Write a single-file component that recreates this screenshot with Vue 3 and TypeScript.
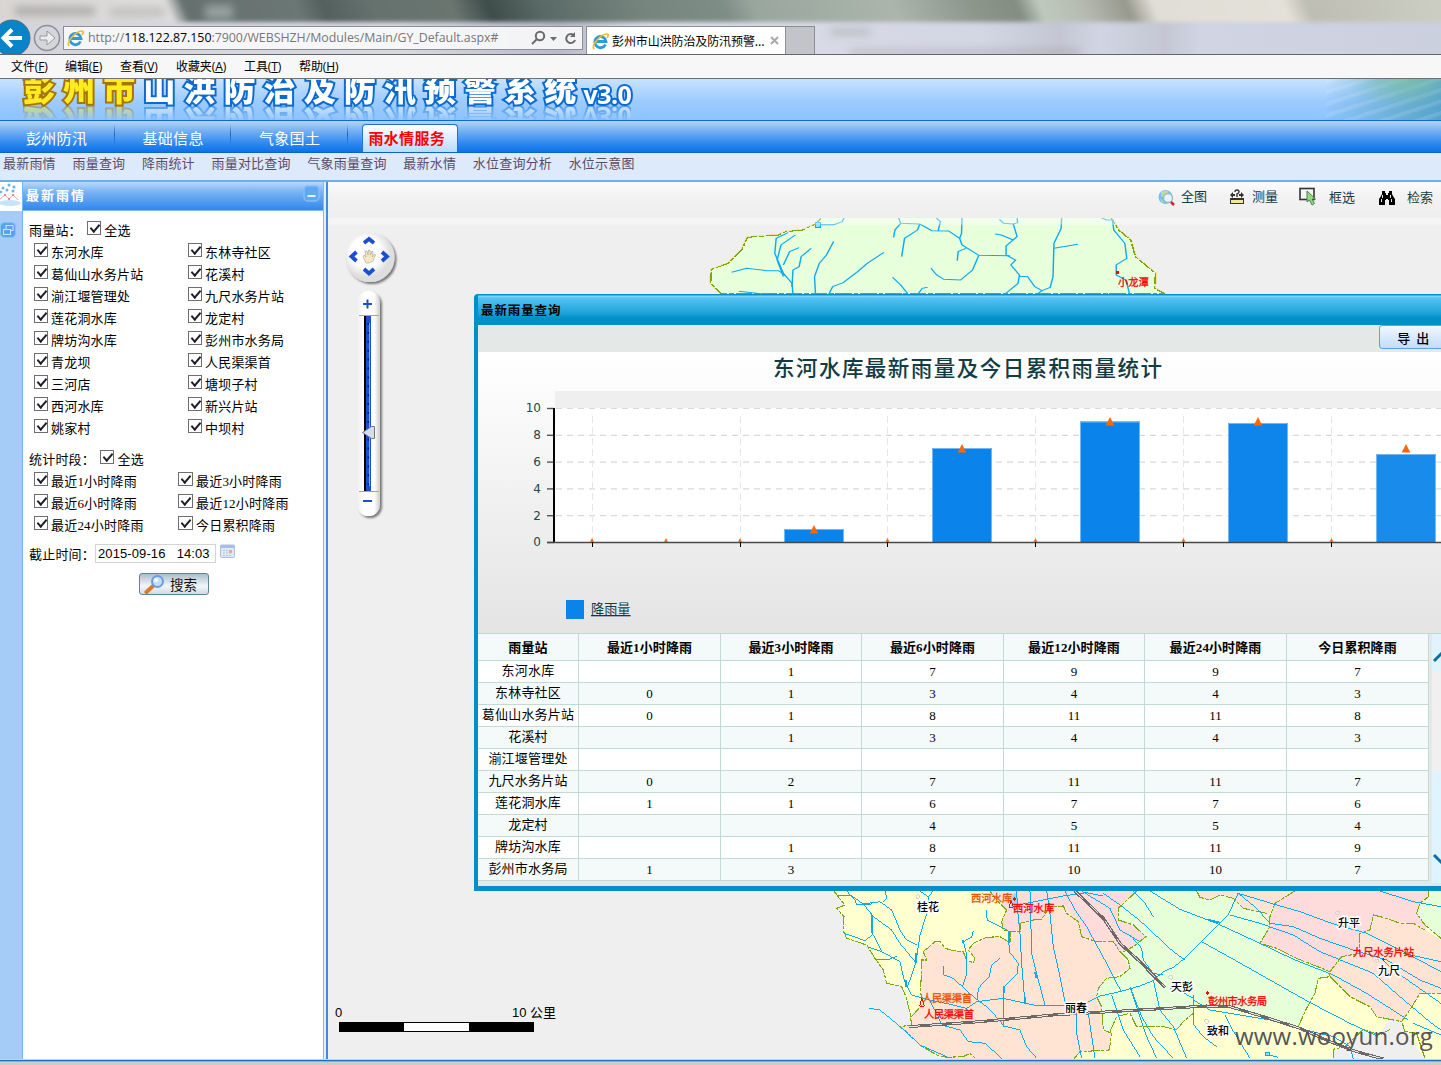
<script setup lang="ts">
const menus = [
  ['文件', 'F', 54], ['编辑', 'E', 55], ['查看', 'V', 56],
  ['收藏夹', 'A', 68], ['工具', 'T', 55], ['帮助', 'H', 60],
] as [string, string, number][]
const tabs = ['彭州防汛', '基础信息', '气象国土']
const subTabs = ['最新雨情', '雨量查询', '降雨统计', '雨量对比查询', '气象雨量查询', '最新水情', '水位查询分析', '水位示意图']
const stations = [
  '东河水库', '东林寺社区', '葛仙山水务片站', '花溪村', '湔江堰管理处', '九尺水务片站',
  '莲花洞水库', '龙定村', '牌坊沟水库', '彭州市水务局', '青龙坝', '人民渠渠首',
  '三河店', '塘坝子村', '西河水库', '新兴片站', '姚家村', '中坝村',
]
const periods = ['最近1小时降雨', '最近3小时降雨', '最近6小时降雨', '最近12小时降雨', '最近24小时降雨', '今日累积降雨']
const rows: string[][] = [
  ['东河水库', '', '1', '7', '9', '9', '7'],
  ['东林寺社区', '0', '1', '3', '4', '4', '3'],
  ['葛仙山水务片站', '0', '1', '8', '11', '11', '8'],
  ['花溪村', '', '1', '3', '4', '4', '3'],
  ['湔江堰管理处', '', '', '', '', '', ''],
  ['九尺水务片站', '0', '2', '7', '11', '11', '7'],
  ['莲花洞水库', '1', '1', '6', '7', '7', '6'],
  ['龙定村', '', '', '4', '5', '5', '4'],
  ['牌坊沟水库', '', '1', '8', '11', '11', '9'],
  ['彭州市水务局', '1', '3', '7', '10', '10', '7'],
]
const ticks = [10, 8, 6, 4, 2, 0].map((v, i) => ({ v, y: 408.5 + i * 26.8 }))
const guides = [592.5, 740.5, 887.5, 1035.5, 1183.5, 1331.5]
const bars = [
  { x: 784, top: 529, o: 1 }, { x: 932, top: 448, o: 1 }, { x: 1080, top: 421.5, o: 1 },
  { x: 1228, top: 423, o: 0.99 }, { x: 1376, top: 454, o: 0.94 },
]
const marks: [number, number][] = [[814, 529.5], [962, 448.5], [1110, 421.5], [1258, 421.5], [1406, 448.5]]
const zeroMarks = [592, 666, 740, 887.5, 1035.5, 1183.5, 1331.5]
// rivers of the southern sheet
const rivers = [
  '50,45 95,48 130,72 180,65 215,90 240,150 260,180 290,195', '80,33 105,60 110,75 155,72', '195,33 200,55 190,65',
  '155,100 157,165 135,182 68,158', '130,72 160,110 215,150 240,190 285,245', '160,165 185,215 140,200', '185,215 240,245 250,290 262,325',
  '165,238 205,240 230,228', '300,33 325,50 322,95 300,165 288,245 270,300 262,320 275,345 330,360 400,375 440,385 470,365',
  '325,50 340,33', '370,258 372,285 400,295 425,318 460,350 500,380 520,400 552,438 600,450 620,500 650,535',
  '460,153 455,172 430,185 440,225 438,290 428,318', '540,235 515,255 508,290 475,325 472,360',
  '498,90 502,120 565,152 568,215 595,250 592,280 552,320 550,440', '470,365 550,355 640,375 735,378 800,368 840,348 900,335 960,318 1000,302 1030,275 1060,262 1095,235 1145,183 1225,105 1255,38',
  '590,33 593,90 600,160 605,250 615,370', '630,33 635,220 655,300 675,375', '680,33 690,100 700,200 720,290 735,365 768,380 770,460 785,535',
  '605,73 660,62 730,48 800,38 850,48', '735,33 765,90 800,140 860,250 890,310 905,335', '785,33 870,85 900,150 960,185',
  '850,40 900,75 960,122 1060,215 1095,240', '940,33 975,70 1000,110', '148,385 180,390 235,435 300,495 380,530',
  '330,365 350,400 365,435 420,450 445,485 495,490 545,535', '805,400 825,535', '875,345 910,450 960,530', '930,320 950,380 980,470 1010,535',
  '990,33 1080,88 1190,130 1320,190 1425,240 1540,285 1640,340 1765,420', '1230,105 1320,130 1420,165 1500,215 1660,280 1740,350 1835,430 1863,450',
  '1145,185 1235,235 1350,300 1465,365 1590,430 1675,470', '1255,40 1370,75 1440,95 1535,130 1640,160 1760,220 1863,275',
  '1255,40 1310,85 1350,130 1420,140 1500,175 1600,210 1700,240 1800,300 1863,325', '1680,33 1780,65 1863,80', '1750,220 1863,245',
  '1690,240 1720,270 1863,370', '930,165 965,205 970,240 1000,280 1030,285', '930,320 965,410 1000,470 1060,535',
  '1000,300 1020,390 1060,440 1100,535', '1120,345 1122,435 1150,470 1190,500', '1120,360 1170,390 1260,405 1350,420 1435,445 1540,470 1590,500 1600,537',
  '1215,405 1235,445 1290,535', '1050,325 1085,335 1120,355', '1340,523 1375,532', '1780,430 1863,465',
]
const bounds = [
  '42,33 62,60 75,75 50,85 72,110 70,150 80,175 140,195 165,235 190,270 200,310 245,320 258,350 270,400 275,435 240,440 265,460 300,495 350,525 380,532 430,530 450,520 466,535',
  '275,410 310,370 302,340 305,240 320,240 310,215 345,185 360,185 375,205 400,212 430,215 440,240 460,248 465,235 445,210 460,190 500,172 540,170 570,188 570,155 600,155 600,130 640,120 665,118 690,80 730,78 740,100 775,125 785,170 830,185 880,185 900,215 925,240 930,265 900,290 860,295 835,325 830,350 845,380 850,450 875,460 868,510 780,515 762,537',
  '510,33 530,60 560,90 545,125 550,150 570,155', '950,33 895,85 895,120 940,135 978,170 940,200 905,218',
  '870,455 890,410 930,400 950,440 1030,440 1070,450 1090,425 1120,400 1120,365', '1130,33 1140,52 1170,60 1200,45 1240,55 1270,85 1340,100',
  '1425,33 1365,70 1350,110 1350,140 1320,190 1370,205 1430,235 1530,275 1565,230 1620,220 1620,160 1650,150 1660,105 1700,115 1740,130 1780,130 1815,150',
  '1825,33 1825,50 1800,70 1790,100 1815,135 1863,175', '1435,440 1460,385 1485,340 1495,295 1530,290 1530,275',
  '1530,290 1550,310 1590,350 1650,380 1670,410 1745,425 1770,390 1800,340 1863,340', '1540,535 1540,508 1575,500 1630,448 1680,465 1710,448', '1747,430 1755,455 1790,460 1815,535',
]
const topRivers = [
  '322,111 318,125 300,134 268,134', '205,158 180,175 177,220 195,280 213,310 215,342', '220,165 190,195 182,240 195,290', '228,203 208,215 195,255',
  '253,205 232,230 228,260 215,270 213,320', '300,184 285,225 270,250 260,290 262,342', '405,217 370,250 350,275 320,308 298,320 290,342',
  '87,277 118,265 160,272 185,272 200,288', '102,334 148,341', '435,111 440,130 480,132 505,152 540,153 563,175 568,195 603,226 668,227',
  '480,132 475,150 448,175 442,230', '440,130 428,150 425,172', '512,111 523,125 518,153', '568,111 567,160 563,175', '576,205 560,215 558,242',
  '603,226 590,270 565,300 530,298 515,285 503,265', '423,292 440,315 455,342', '496,322 485,325 476,342', '646,118 655,130 675,132 683,170 660,198 660,225 680,240 670,255 688,285 685,310 658,342',
  '683,111 684,128 675,132', '637,162 650,165 675,180', '688,289 705,290 720,320 735,332 752,322 758,290 760,190 775,145 776,111', '725,342 735,332', '760,205 810,193',
  '855,111 870,120 882,120 885,150 908,190 912,235 890,255 890,285 910,300 918,342',
]
const topBound = '275,111 265,130 235,150 200,155 185,165 120,172 108,210 80,250 45,268 43,310 65,342 992,342 970,325 972,280 930,230 920,180 895,150 878,111'
const rail = ['267,440 480,425 700,405 840,397 1160,378 1230,380 1330,410 1440,445 1530,485 1610,515 1690,537', '765,33 850,115 900,190 960,245 1036,323']
</script>

<template>
  <div class="app">
    <header class="chrome">
      <div class="glass"></div>
      <div class="ghost g1"></div><div class="ghost g2"></div><div class="ghost g3"></div><div class="ghost g4"></div><div class="ghost g5"></div>
      <div class="bar">
        <svg class="nav-btns" width="63" height="35" viewBox="0 19 63 35">
          <circle cx="12" cy="38" r="18" fill="#0a84c8" stroke="#526a7c" />
          <path d="M22 38H4M12 29.5L3.5 38l8.500 8.500" fill="none" stroke="#fff" stroke-width="4" />
          <circle cx="47" cy="38" r="12.500" fill="#d5d6dc" stroke="#8d8e94" stroke-width="1.500" />
          <path d="M40 36h7v-5l8 7-8 7v-5h-7z" fill="#eee" stroke="#999" />
        </svg>
        <div class="address">
          <svg class="ie" width="17" height="17" viewBox="0 0 17 17"><path d="M13.500 11.500A5.600 5.600 0 1 1 14 8.500H4" fill="none" stroke="#2d9bd9" stroke-width="2.800" /><path d="M2 16C-1 12 9 1 15 1c2 0 1 3 0 4" fill="none" stroke="#f4b92b" stroke-width="1.700" /></svg>
          <span class="url">http://<b>118.122.87.150</b>:7900/WEBSHZH/Modules/Main/GY_Default.aspx#</span>
          <svg width="50" height="18" viewBox="0 0 50 18" fill="none" stroke="#6b6b6b" stroke-width="2"><circle cx="11" cy="7" r="4.200" /><path d="M8 10L3 15" /><path d="M21 8h7l-3.500 4z" fill="#6b6b6b" stroke="none" /><path d="M44.500 6A4.500 4.500 0 1 0 46 11" /><path d="M46 3v5h-5z" fill="#6b6b6b" stroke="none" /></svg>
        </div>
        <div class="tab">
          <svg class="ie" width="17" height="17" viewBox="0 0 17 17"><path d="M13.500 11.500A5.600 5.600 0 1 1 14 8.500H4" fill="none" stroke="#2d9bd9" stroke-width="2.800" /><path d="M2 16C-1 12 9 1 15 1c2 0 1 3 0 4" fill="none" stroke="#f4b92b" stroke-width="1.700" /></svg>
          <span>彭州市山洪防治及防汛预警...</span>
          <svg class="x" width="9" height="9" viewBox="0 0 9 9"><path d="M1 1l7 7M8 1L1 8" stroke="#aaa" stroke-width="2" /></svg>
        </div>
        <div class="newtab"></div>
      </div>
    </header>
    <nav class="menu"><span v-for="m in menus" :key="m[1]" :style="{ width: m[2] + 'px' }">{{ m[0] }}(<u>{{ m[1] }}</u>)</span></nav>
    <section class="banner">
      <div class="title"><span class="gold">彭州市</span><span>山洪防治及防汛预警系统</span><span class="ver">v3.0</span></div>
      <div class="photo"></div>
    </section>
    <nav class="main-nav">
      <a v-for="t in tabs" :key="t">{{ t }}</a>
      <a class="on">雨水情服务</a>
    </nav>
    <nav class="sub-nav"><a v-for="t in subTabs" :key="t">{{ t }}</a></nav>

    <div class="body">
      <aside class="rail">
        <svg width="22" height="29" viewBox="0 0 22 29"><rect width="22" height="29" fill="#fff" /><ellipse cx="10" cy="21" rx="11" ry="3" fill="#c4e4fa" /><path d="M0 17l5-4 4 4 4-4 5 5" fill="none" stroke="#dcb0b0" /><g fill="#63b4f0"><circle cx="3" cy="6" r="1.500" /><circle cx="9" cy="3" r="1.500" /><circle cx="14" cy="5" r="1.500" /><circle cx="7" cy="8" r="1.500" /><circle cx="13" cy="9" r="1.500" /><circle cx="1" cy="10" r="1.300" /></g><g fill="#e66"><circle cx="5" cy="13" r="1" /><circle cx="13" cy="13" r="1" /><circle cx="9" cy="17" r="1" /></g></svg>
        <svg class="restore" width="16" height="16" viewBox="0 0 16 16"><rect x=".5" y=".5" width="15" height="15" rx="4" fill="#5aa2ee" stroke="#8ac2fa" /><rect x="6" y="3.500" width="7" height="5" fill="none" stroke="#cde6ff" /><rect x="3.500" y="7.500" width="7" height="5" fill="#5aa2ee" stroke="#cde6ff" /></svg>
      </aside>
      <aside class="panel">
        <div class="panel-title">最新雨情
          <svg width="17" height="17" viewBox="0 0 17 17"><rect x="1" y="1" width="15" height="15" rx="4" fill="#5ea8f4" stroke="#85bdf6" stroke-width="1.500" /><path d="M4.500 11h8" stroke="#e4f1ff" stroke-width="2" /></svg>
        </div>
        <div class="panel-body">
          <div class="line first">雨量站： <i class="cb"></i>全选</div>
          <div class="grid stations"><label v-for="s in stations" :key="s"><i class="cb"></i>{{ s }}</label></div>
          <div class="line second">统计时段： <i class="cb"></i>全选</div>
          <div class="grid periods"><label v-for="s in periods" :key="s"><i class="cb"></i>{{ s }}</label></div>
          <div class="line time">截止时间：<span class="input">2015-09-16 &nbsp; 14:03</span>
            <svg width="15" height="14" viewBox="0 0 15 14"><rect x=".5" y="1" width="14" height="12.500" rx="1" fill="#dfe7fb" stroke="#aebce0" /><rect x="1" y="1" width="13" height="3" fill="#a5bdf0" /><path d="M3 6.500h9M3 9h9M3 11.500h9" stroke="#b6c4e6" stroke-dasharray="2 1" /><path d="M9 6h3v3H9z" fill="#f3a58c" /></svg>
          </div>
          <button class="search"><svg width="21" height="19" viewBox="0 0 21 19"><path d="M9 11l-6.500 6" stroke="#d97a2c" stroke-width="4" stroke-linecap="round" /><circle cx="13.500" cy="6.500" r="5.500" fill="#bfe0fb" stroke="#6d9be0" stroke-width="2" /><circle cx="12" cy="5" r="2" fill="#fff" /></svg>搜索</button>
        </div>
      </aside>
      <div class="split"></div>

      <main class="main">
        <div class="tools">
          <span class="tool t1"><svg width="18" height="18" viewBox="0 0 18 18"><circle cx="7.500" cy="8" r="7" fill="#6fc0ee" /><path d="M3 3q5-3 8 0l-3 4-5 1zM2 9l4 4-2 1z" fill="#b9dca0" /><circle cx="10" cy="9" r="4.500" fill="#e5f3ff" stroke="#9bb2c9" stroke-width="1.300" /><path d="M13 13l3 3" stroke="#d3202a" stroke-width="2.500" /></svg>全图</span>
          <span class="tool t2"><svg width="16" height="16" viewBox="0 0 16 16"><rect x="1.500" y="10.500" width="13" height="4" fill="#f3e7a0" stroke="#333" /><path d="M1 6l3-3v2h2v2H4v2zM15 6l-3-3v2h-2v2h2v2z" fill="#333" /><path d="M1 9.500h14" stroke="#333" /><path d="M6 3q0-2 2-2t2 2q0 1-2 2v3" fill="none" stroke="#333" stroke-width="1.400" /></svg>测量</span>
          <span class="tool t3"><svg width="19" height="20" viewBox="0 0 19 20"><rect x="1" y="1.500" width="14" height="11" fill="#f4f4f4" stroke="#333" stroke-width="1.600" /><path d="M8 4v11l2.500-2 2.500 5 2.500-1.500-2.500-4.500h3.500z" fill="#8fdc7c" stroke="#47724a" stroke-width=".9" /></svg>框选</span>
          <span class="tool t4"><svg width="18" height="15" viewBox="0 0 18 15"><path d="M4 0h3v2h1v2h2V2h1V0h3v3l1 2 2 3v6h-6v-5h-1v-1H8v1H7v5H1V8l2-3 1-2z" fill="#000" /><path d="M4.500 4v3M3.500 8v3M12.500 4v3M13.500 8v3" stroke="#fff" stroke-width=".9" /></svg>检索</span>
        </div>
        <div class="map">
          <svg class="land" width="1113" height="842" viewBox="328 218 1113 842" shape-rendering="crispEdges">
            <g transform="translate(690 180) scale(.4789 .3333)" fill="none">
              <polygon :points="topBound" fill="#e8ffdc" stroke="#fbe0a0" stroke-width="7" />
              <polygon :points="topBound" fill="#e8ffdc" class="bd" />
              <polyline v-for="(r, i) in topRivers" :key="i" :points="r" class="rv" />
            </g>
            <rect x="1116" y="271" width="3" height="3" fill="#f00" />
            <rect x="815" y="222" width="5" height="5" fill="#8fdcff" stroke="#00a8f0" />
            <g transform="translate(820 880) scale(.3333)" fill="none">
              <polygon fill="#ffffd0" points="42,33 62,60 75,75 50,85 72,110 70,150 80,175 140,195 165,235 190,270 200,310 245,320 258,350 270,400 275,435 240,440 265,460 300,495 350,525 380,537 1540,537 1540,510 1575,500 1630,450 1680,460 1700,428 1720,417 1740,425 1780,490 1815,537 1863,537 1863,33" />
              <polygon fill="#ffe4d4" points="275,435 270,410 310,370 302,340 305,240 310,210 345,185 375,205 430,215 440,240 460,248 465,235 445,210 500,172 540,170 570,188 570,155 600,155 600,130 665,118 690,80 730,78 775,125 785,170 880,185 925,240 930,265 860,295 835,325 830,350 845,380 850,450 875,460 868,510 780,515 762,537 380,537 300,495 240,440" />
              <polygon fill="#ffdcdc" points="510,33 530,60 560,90 545,125 550,150 600,155 600,130 665,118 690,80 730,78 775,125 785,170 880,185 905,218 940,200 978,170 940,135 895,120 895,85 950,33" />
              <polygon fill="#e6ffd8" points="950,33 895,85 895,120 940,135 978,170 940,200 905,218 930,265 860,295 835,325 830,350 845,380 850,455 870,455 890,410 930,400 950,440 1030,440 1070,450 1090,425 1120,400 1120,380 1210,375 1435,440 1460,385 1485,340 1495,295 1530,290 1530,275 1430,235 1320,190 1350,140 1350,110 1270,85 1240,55 1200,45 1170,60 1140,52 1130,33" />
              <polygon fill="#ffe4d4" points="1130,33 1140,52 1170,60 1200,45 1240,55 1270,85 1345,105 1365,70 1425,33" />
              <polygon fill="#ffdcdc" points="1425,33 1365,70 1350,110 1350,140 1320,190 1370,205 1430,235 1530,275 1565,230 1620,220 1620,160 1650,150 1660,105 1780,130 1815,150 1820,140 1790,100 1800,70 1825,50 1825,33" />
              <polygon fill="#e6ffd8" points="1825,33 1825,50 1800,70 1790,100 1815,135 1863,175 1863,33" />
              <polygon fill="#ffe4d4" points="1530,275 1565,230 1620,220 1620,160 1650,150 1660,105 1780,130 1815,150 1863,180 1863,340 1800,340 1770,390 1745,425 1670,410 1650,380 1590,350 1530,290" />
              <ellipse cx="583" cy="65" rx="10" ry="25" fill="#8fdcff" />
              <polyline v-for="(b, i) in bounds" :key="'b' + i" :points="b" class="bd" />
              <polyline v-for="(r, i) in rivers" :key="'r' + i" :points="r" class="rv" />
              <path class="rv wide" d="M156 105v55M288 220v28M257 300v20M567 155v33M552 318v22M645 275l5 20M615 350v18M428 180v10M1165 120l35 8" />
              <g v-for="(r, i) in rail" :key="'t' + i"><polyline :points="r" stroke="#6c6868" stroke-width="9" /><polyline :points="r" stroke="#fff" stroke-width="2.500" stroke-dasharray="34 30" /></g>
              <path d="M305 355l-6 24h14zM573 60l-5 22h12z" stroke="#f00" stroke-width="3" />
              <path d="M578 57h10M583 52v10M1157 339h10M1162 334v10M1685 238h10M1690 233v10" stroke="#f00" stroke-width="4" />
              <circle v-for="c in [[294,50],[1052,292],[1160,424],[1553,99],[1670,243]]" :key="c[0]" :cx="c[0]" :cy="c[1]" r="6" stroke="#d0d4d8" stroke-width="3" />
              <rect x="1337" y="518" width="11" height="10" fill="#8fdcff" stroke="#00a8f0" stroke-width="3" />
            </g>
            <g class="red">
              <text x="1118" y="286">小龙潭</text>
              <text x="1013" y="912">西河水库</text><text x="924" y="1018" textLength="50">人民渠渠首</text>
              <text x="1353" y="956" textLength="61">九尺水务片站</text><text x="1208" y="1005" textLength="59">彭州市水务局</text>
              <text x="971" y="902" class="org">西河水库</text><text x="922" y="1002" textLength="50" class="org">人民渠渠首</text>
            </g>
            <g class="blk">
              <text x="917" y="911">桂花</text><text x="1065" y="1012">丽春</text><text x="1171" y="991">天彭</text>
              <text x="1207" y="1035">致和</text><text x="1338" y="927">升平</text><text x="1378" y="975">九尺</text>
            </g>
          </svg>
          <div class="haze"></div>
          <svg class="control" width="64" height="300" viewBox="340 228 64 300">
            <defs>
              <linearGradient id="tube"><stop offset="0" stop-color="#eee" /><stop offset=".3" stop-color="#fff" /><stop offset=".75" stop-color="#fff" /><stop offset="1" stop-color="#ccc" /></linearGradient>
              <radialGradient id="dial" cx=".42" cy=".4"><stop offset=".6" stop-color="#fff" /><stop offset="1" stop-color="#dedede" /></radialGradient>
              <filter id="sh" x="-20%" y="-20%" width="150%" height="150%"><feDropShadow dx="2" dy="2" stdDeviation="1" flood-opacity=".5" /></filter>
            </defs>
            <circle cx="370" cy="257.500" r="24.500" fill="url(#dial)" filter="url(#sh)" />
            <g fill="none" stroke="#1850d0" stroke-width="3.800"><path d="M364 243l5-4 5 4M364 269l5 4.500 5-4.500M356.500 252l-5 4.500 5 4.500M382 252l5 4.500-5 4.500" /></g>
            <path d="M363 257l1-2 2 2-1-6h2l1 4 .5-5h1.500l.5 5 1.500-4 1 1-.5 5 2-3 1 1-2.500 6-4 2h-3z" fill="#f3e7c5" stroke="#aaa18c" stroke-width=".6" />
            <rect x="357" y="291" width="23" height="225" rx="11.500" fill="url(#tube)" filter="url(#sh)" />
            <path d="M363 304h9M367.500 299.500v9M363 501h9" stroke="#1850d0" stroke-width="2" />
            <path d="M359 315.500h20M359 491.500h20" stroke="#86a8ea" />
            <rect x="364" y="316" width="7" height="175" fill="#1850d0" /><rect x="364" y="316" width="2" height="175" fill="#000" />
            <path d="M368.500 323v163" stroke="#001c60" stroke-width="2" stroke-dasharray="2 6.900" /><path d="M369.500 323v163" stroke="#88a6e4" />
            <path d="M362.500 432.500l9-6h3v12h-3z" fill="#d4dbf2" stroke="#777" />
          </svg>
          <div class="scale">
            <div class="scale-labels"><span>0</span><span>10 公里</span></div>
            <div class="scale-bar"><i></i><i></i><i></i></div>
          </div>
          <div class="mark">www.wooyun.org</div>
        </div>

        <section class="popup">
          <div class="popup-title">最新雨量查询</div>
          <div class="popup-tools"><button>导 出</button></div>
          <svg class="chart" width="963" height="281" viewBox="478 352 963 281">
            <defs><linearGradient id="cbg" x2="0" y2="1"><stop offset="0" stop-color="#fff" /><stop offset="1" stop-color="#e4e4e4" /></linearGradient></defs>
            <rect x="478" y="352" width="963" height="281" fill="url(#cbg)" />
            <text x="967.500" y="376" text-anchor="middle" class="ct" textLength="389">东河水库最新雨量及今日累积雨量统计</text>
            <rect x="555" y="391" width="886" height="18" fill="#efefef" />
            <rect x="555" y="408" width="886" height="134.500" fill="#fff" />
            <g v-for="t in ticks" :key="t.v">
              <path v-if="t.v" :d="`M556 ${t.y}H1441`" stroke="#d9d9d9" stroke-width="1.200" stroke-dasharray="6 5" />
              <path :d="`M547 ${t.y}H554`" stroke="#555" stroke-width="1.400" />
              <text x="541" :y="t.y + 3.800" text-anchor="end" class="ax">{{ t.v }}</text>
            </g>
            <path v-for="g in guides" :key="g" :d="`M${g} 416V542`" stroke="#e6e6e6" stroke-dasharray="7 4" />
            <g v-for="b in bars" :key="b.x"><rect :x="b.x" :y="b.top" width="60" :height="542 - b.top" fill="#0a84ea" :fill-opacity="b.o" /><path :d="`M${b.x + .5} 542V${b.top + .5}h59V542`" fill="none" stroke="#73b8f2" /></g>
            <path d="M554 408V543" stroke="#000" stroke-width="2" /><path d="M547 542.500H1441" stroke="#484848" stroke-width="1.300" />
            <path v-for="g in guides" :key="'t' + g" :d="`M${g} 542v5`" stroke="#000" />
            <path v-for="z in zeroMarks" :key="'z' + z" :d="`M${z - 2} 542l2-4 2 4z`" fill="#ff6600" />
            <path v-for="m in marks" :key="'m' + m[0]" :d="`M${m[0] - 4.300} ${m[1] + 4}l4.300-8.500 4.300 8.500z`" fill="#ff6600" />
            <rect x="566" y="600" width="18" height="19" fill="#0a84ea" />
            <text x="591" y="614" class="lg">降雨量</text>
          </svg>
          <div class="data">
            <table>
              <colgroup><col style="width: 101px"><col style="width: 142px"><col style="width: 141px"><col style="width: 142px"><col style="width: 141px"><col style="width: 142px"><col style="width: 142px"></colgroup>
              <thead><tr><th>雨量站</th><th v-for="p in periods" :key="p">{{ p }}</th></tr></thead>
              <tbody><tr v-for="r in rows" :key="r[0]"><td v-for="(c, i) in r" :key="i">{{ c }}</td></tr></tbody>
            </table>
            <div class="scroll">
              <svg width="9" height="37" viewBox="0 0 9 37"><path d="M2 27l8-8" stroke="#0a6ea8" stroke-width="3" /></svg>
              <svg class="dn" width="9" height="112" viewBox="0 0 9 112"><path d="M2 84l8 8" stroke="#0a6ea8" stroke-width="3" /></svg>
            </div>
          </div>
        </section>
      </main>
    </div>
    <footer></footer>
  </div>
</template>

<style>
html, body { margin: 0; overflow: hidden; }
</style>
<style scoped>
* { box-sizing: border-box; }
.app { width: 1441px; height: 1065px; display: flex; flex-direction: column; overflow: hidden; background: #fff; font: 13px "Liberation Serif", "Noto Sans CJK SC", serif; color: #000; }
.chrome { height: 55px; flex: none; display: flex; flex-direction: column; justify-content: flex-end; position: relative; overflow: hidden; border-bottom: 1px solid #65666c; background: linear-gradient(90deg, #d4d5dc 0, #d8d9e0 400px, #b8bbc8 560px, #dcdfe8 650px, #d3d6e3 980px, #c4c7d3 1060px, #d1d4e2 1100px, #c4c7d3 1165px, #d0d4e3 1200px, #cbd0df 1441px); }
.glass { position: absolute; left: -10px; right: -10px; top: -10px; height: 32px; filter: blur(2px); background: linear-gradient(68deg, #d8d5d3 0, #dedddc 170px, #65706f 186px, #6b7774 290px, #53605e 315px, #65726e 362px, #6a7570 435px, #3e4c4a 468px, #596965 515px, #77857f 612px, #7f8d87 686px, #99a69e 714px, #abb5ab 843px, #8c968b 917px, #838d82 958px, #becabd 980px, #b5bab0 1020px, #98998e 1060px, #e0ded6 1085px, #e4e1d9 1206px, #bebdb3 1228px, #cbcdc2 1344px); }
.ghost { position: absolute; filter: blur(4px); background: #777; opacity: .5; height: 8px; }
.g1 { left: 15px; top: 7px; width: 80px; }
.g2 { left: 110px; top: 8px; width: 55px; opacity: .3; }
.g3 { left: 205px; top: 5px; width: 28px; height: 14px; background: #c7d0d0; }
.g4 { left: 830px; top: 29px; width: 40px; height: 6px; opacity: .35; }
.g5 { left: 850px; top: 50px; width: 230px; height: 5px; opacity: .35; }
.bar { position: relative; display: flex; height: 35px; align-items: flex-start; flex: none; }
.nav-btns { flex: none; }
.address { width: 520px; height: 24px; margin-top: 7px; border: 1px solid #8d8e95; background: rgba(249, 249, 251, .9); display: flex; align-items: center; padding-left: 3px; flex: none; }
.address svg { flex: none; }
.url { font: 12.400px/22px "Open Sans", "Noto Sans", sans-serif; color: #777; margin-left: 4px; width: 441px; white-space: nowrap; letter-spacing: -.03px; }
.url b { font-weight: 400; color: #000; }
.tab { width: 200px; height: 29px; margin: 7px 0 0 3px; border: 1px solid #8d8e95; border-bottom: 0; background: #fff; display: flex; align-items: center; padding-left: 5px; font: 12px "Noto Sans CJK SC", sans-serif; letter-spacing: -.1px; flex: none; }
.tab span { margin: -2px 0 0 3px; width: 158px; white-space: nowrap; }
.tab .x { margin-top: -2px; }
.newtab { width: 29px; height: 29px; margin-top: 7px; border: 1px solid #8d8e95; border-left: 0; background: #c3c4ca; }
.menu { height: 24px; flex: none; background: #f7f7f7; border-bottom: 1px solid #717171; display: flex; padding-left: 11px; font: 12px/23px "Open Sans", "Noto Sans CJK SC", sans-serif; }
.menu span { flex: none; letter-spacing: -.1px; white-space: nowrap; }
.banner { height: 41px; flex: none; overflow: hidden; display: flex; justify-content: space-between; background: linear-gradient(#c8e2ff, #9ccbff 55%, #8cc3ff); }
.title { display: flex; margin: -10px 0 0 23px; height: 37px; font: 900 32px/36px "Noto Sans CJK SC", sans-serif; letter-spacing: 8.100px; color: #fff; -webkit-text-stroke: 4px #0b6ad2; paint-order: stroke fill; white-space: nowrap; -webkit-box-reflect: below -1px linear-gradient(transparent 55%, rgba(0, 0, 0, .5)); }
.gold { color: #ffec20; -webkit-text-stroke-color: #a87400; }
.ver { font: 700 25px/50px "Open Sans", sans-serif; letter-spacing: -.5px; margin-left: -1px; }
.photo { width: 115px; background: radial-gradient(ellipse at 70% 0, rgba(130, 195, 160, .75), transparent 50%), repeating-linear-gradient(162deg, rgba(255, 255, 255, .12) 0 3px, transparent 5px 11px), linear-gradient(100deg, rgba(100, 180, 220, 0), #67aed4 70%, #56a3cc); }
.main-nav { height: 33px; flex: none; display: flex; border-top: 1px solid #0e68d4; border-bottom: 1px solid #0b62ce; background: linear-gradient(#b4d6fa, #78b2f4 30%, #2a86ee 75%, #0c72e8); font: 15px/33px "Noto Sans CJK SC", sans-serif; letter-spacing: .3px; color: #fff; }
.main-nav a { width: 116.500px; padding-left: 26px; background: linear-gradient(rgba(16, 80, 190, 0), #1d5fc4, rgba(16, 80, 190, 0)) no-repeat right 2px top 3px / 1px 22px; flex: none; }
.main-nav a.on { width: 96px; height: 28px; margin: 3px 0 0 12px; padding-left: 6px; line-height: 26px; background: linear-gradient(#fff, #b8dbff); border: 1px solid #2171d6; border-bottom: 0; border-radius: 4px 4px 0 0; color: #f00; font-weight: 700; }
.sub-nav { height: 29px; flex: none; display: flex; gap: 16.700px; padding-left: 3px; background: #ddeafb; border-bottom: 2px solid #68b0ee; color: #5c4a68; font: 13px/20px "Noto Sans CJK SC", sans-serif; letter-spacing: .2px; }
.body { flex: 1; display: flex; min-height: 0; }
.rail { width: 22px; background: #a4ccf7; display: flex; flex-direction: column; flex: none; }
.rail .restore { margin: 11px 0 0 0; }
.panel { width: 301px; flex: none; border-left: 1px solid #78b4fa; background: #fff; }
.panel-title { height: 29px; display: flex; justify-content: space-between; padding: 4px 3px 0 3px; font: 700 13px/17px "Noto Sans CJK SC", sans-serif; letter-spacing: 2px; color: #fff; background: linear-gradient(#b8d8fb, #7ab3f4 35%, #2f88ee); border-bottom: 1px solid #7cbafa; }
.panel-title svg { margin-top: -1px; }
.panel-body { padding: 7px 0 0 6px; letter-spacing: .2px; }
.line { height: 22px; display: flex; align-items: center; white-space: pre; }
.cb { width: 14px; height: 14px; margin: -2px 3px 0 0; border: 1px solid #6e6e6e; background: #fff; flex: none; position: relative; }
.cb::after { content: ""; position: absolute; left: 3.500px; top: 0; width: 4px; height: 8px; border: solid #1d1d2b; border-width: 0 2px 2px 0; transform: rotate(40deg) skewY(8deg); }
.first .cb { margin-left: 2px; }
.second .cb { margin-left: 2px; }
.grid { display: grid; grid-auto-rows: 22px; padding-left: 5px; }
.grid label { display: flex; align-items: center; white-space: nowrap; }
.stations { grid-template-columns: 154px 1fr; }
.periods { grid-template-columns: 144px 1fr; }
.periods label:nth-child(even) .cb { width: 15px; }
.second { margin-top: 9px; }
.time { margin-top: 7px; }
.input { width: 121px; height: 19px; border: 1px solid #d4d4d4; padding-left: 2px; font: 13px/18px "Liberation Sans", sans-serif; letter-spacing: .1px; margin: 0 4px 0 0; }
.time svg { margin-top: -5px; }
.search { display: flex; align-items: center; width: 70px; height: 22px; margin: 9px 0 0 110px; padding: 0 0 0 4px; border: 1px solid #5d8595; border-radius: 3px; background: linear-gradient(#a9bfcb, #f2f6f8 60%, #d0dbe2); font: 13.500px "Noto Sans CJK SC", sans-serif; color: #111; gap: 5px; white-space: nowrap; }
.split { width: 5px; flex: none; background: linear-gradient(90deg, #7cb8fa 0 1px, #e4f0fc 1px 3px, #3d8ce0 3px); }
.main { flex: 1; position: relative; min-width: 0; background: #efefef; display: flex; flex-direction: column; }
.tools { height: 36px; flex: none; display: flex; justify-content: flex-end; background: linear-gradient(#fbfbfb, #f2f2f2 40%, #eee); color: #143c46; }
.tool { display: flex; align-items: flex-start; gap: 5px; line-height: 29px; }
.tool svg { margin-top: 7px; }
.t1 { width: 71px; }
.t2 { width: 70px; gap: 7px; }
.t3 { width: 79px; gap: 11px; line-height: 32px; }
.t3 svg { margin-top: 5px; }
.t4 { width: 63px; gap: 11px; line-height: 32px; }
.t4 svg { margin-top: 9px; }
.map { flex: 1; min-height: 0; position: relative; overflow: hidden; }
.land { display: block; }
.rv { stroke: #0aaaf2; stroke-width: 3px; }
.rv.wide { stroke-width: 6px; }
.bd { stroke: #78aa0a; stroke-width: 3.200px; stroke-dasharray: 34 4 10 4; }
.land text { font: 11px "Noto Sans CJK SC", sans-serif; }
.red text { fill: #f00; font-size: 10.300px; stroke: #f00; stroke-width: .3px; }
.red .org { fill: #e85000; stroke: #e85000; }
.blk text { fill: #000; stroke: #fff; stroke-width: 3px; paint-order: stroke; font-weight: 500; }
.haze { position: absolute; inset: 0 0 auto; height: 8px; background: linear-gradient(rgba(255, 255, 255, .4), rgba(255, 255, 255, .4) 70%, transparent); }
.control { position: absolute; left: 12px; top: 10px; }
.scale { position: absolute; left: 11px; top: 786px; width: 222px; font: 13px/18px "Liberation Sans", "Noto Sans CJK SC", sans-serif; }
.scale-labels { display: flex; justify-content: space-between; padding-right: 5px; margin-left: -4px; }
.scale-bar { display: flex; width: 195px; height: 10px; border: 1px solid #000; }
.scale-bar i { flex: 1; background: #000; }
.scale-bar i:nth-child(2) { background: #fff; }
.mark { position: absolute; right: 8px; bottom: 6px; font: 24px/34px "Open Sans", sans-serif; color: #555; letter-spacing: .25px; }
.popup { position: absolute; left: 146px; top: 112px; width: 967px; height: 597px; border-left: 4px solid #0090c8; border-bottom: 5px solid #0090c8; background: #e4e9e8; overflow: hidden; border-top-left-radius: 4px; }
.popup-title { height: 31px; margin-left: -4px; padding-left: 7px; font: 700 12.500px/31px "Noto Sans CJK SC", sans-serif; letter-spacing: .9px; background: linear-gradient(#0090c8 0 1px, #8ad8fa 2px, #56c2f4 4px, #18a2d8 20px, #0090c8 24px); }
.popup-tools { height: 27px; display: flex; justify-content: flex-end; }
.popup-tools button { width: 70px; height: 24px; margin: 0 -8px 0 0; border: 1px solid #5d9ff0; border-radius: 3px; background: linear-gradient(#f2f7ff, #c2dcff); font: 13px "Noto Sans CJK SC", sans-serif; font-weight: 500; letter-spacing: 1.500px; color: #000; padding: 0; }
.chart { display: block; }
.ct { font: 500 21.500px "Noto Sans CJK SC", sans-serif; fill: #123c44; }
.ax { font: 12px "DejaVu Sans", sans-serif; fill: #24464e; }
.lg { font: 13.200px "Noto Sans CJK SC", sans-serif; fill: #123c44; text-decoration: underline; }
.data { display: flex; height: 250px; border-top: 1px solid #b8d4f6; overflow: hidden; justify-content: space-between; align-items: stretch; }
table { width: 951px; flex: none; align-self: flex-start; border-collapse: separate; border-spacing: 0; table-layout: fixed; }
th, td { padding: 0; text-align: center; border-right: 1px solid #c0dad6; border-bottom: 1px solid #c0dad6; height: 22px; line-height: 19px; background: #fff; white-space: nowrap; overflow: hidden; }
th { height: 27px; background: #f4fafa; letter-spacing: .1px; }
td:first-child { line-height: 17px; padding-bottom: 3px; letter-spacing: .2px; }
tbody tr:nth-child(even) td { background: #f4fafa; }
.scroll { width: 9px; background: #f0f0f0; display: flex; flex-direction: column; justify-content: space-between; }
.scroll svg { background: #dff4ff; flex: none; }
footer { height: 6px; flex: none; background: linear-gradient(#c4d4e2 0 1px, #1c6ec4 1px 2px, #8ab0d8 2px 3px, #ccc 3px); }
</style>
